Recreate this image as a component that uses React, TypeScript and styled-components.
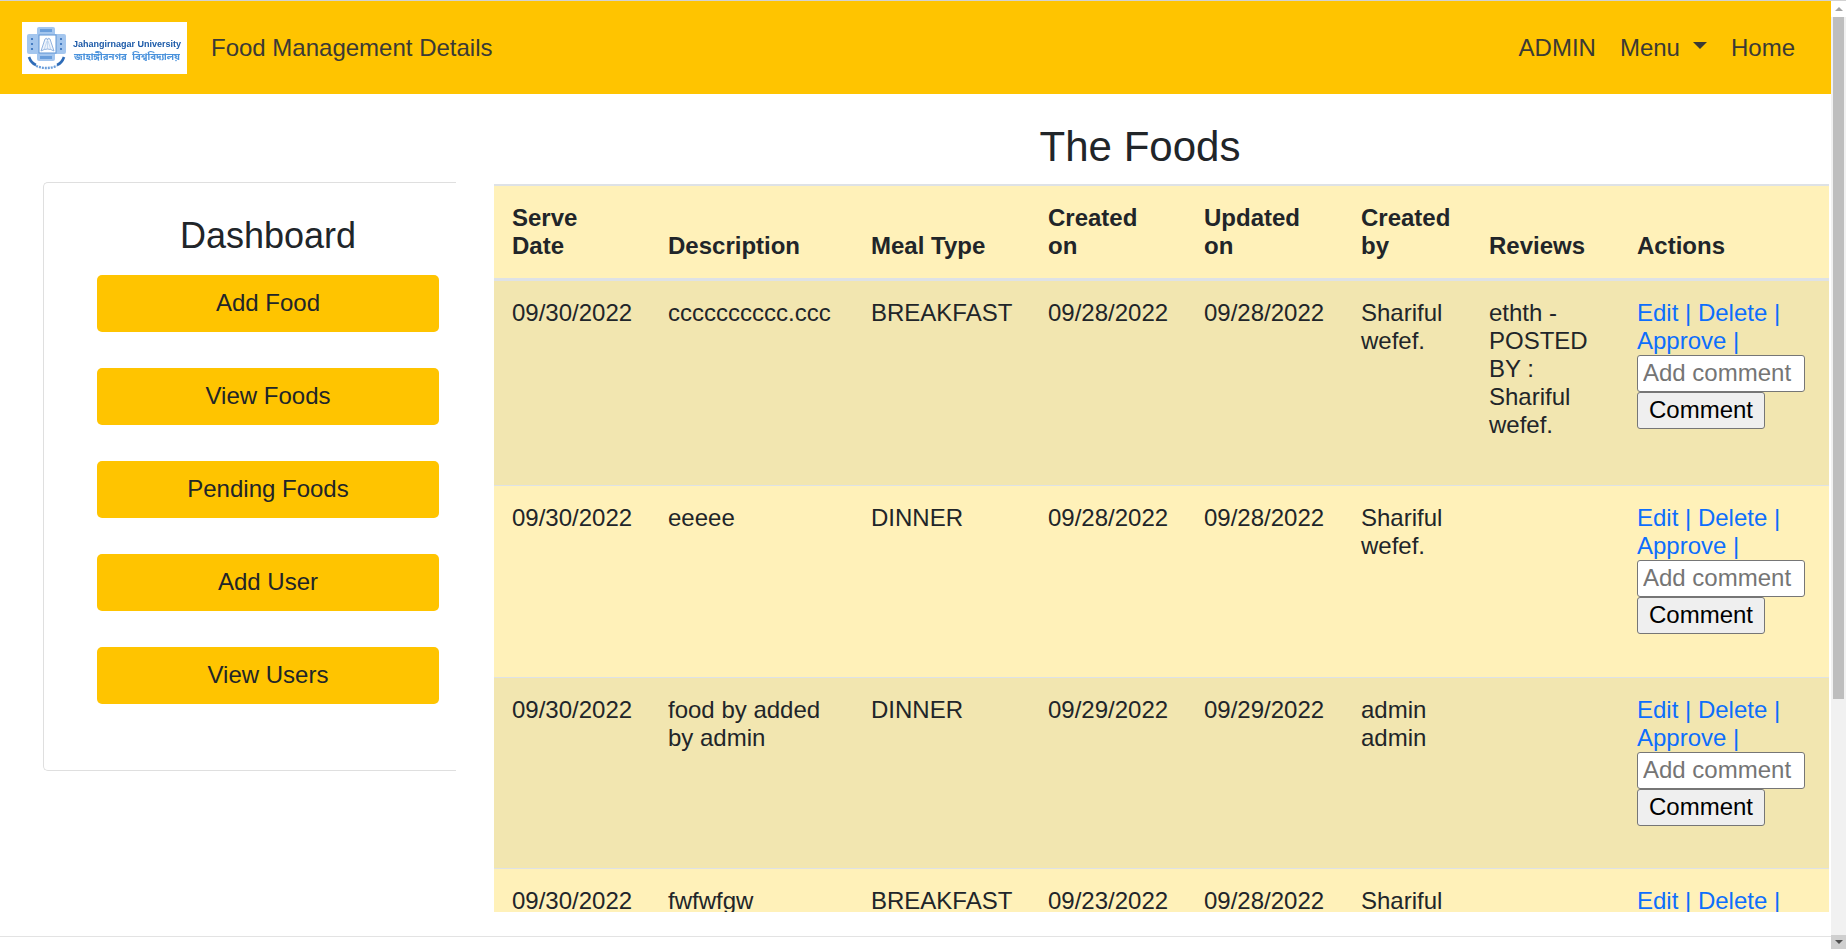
import React from "react";
import styled, { createGlobalStyle } from "styled-components";

const Global = createGlobalStyle`
  html, body { margin: 0; padding: 0; height: 100%; overflow: hidden; background: #fff; }
  body { font-family: "Liberation Sans", Arial, sans-serif; font-size: 24px; color: #212529; }
  * { box-sizing: border-box; }
`;

const Frame = styled.div`
  display: flex;
  width: 1846px;
  height: 949px;
  border-top: 1px solid #d2d2d2;
  overflow: hidden;
`;
const Page = styled.div`
  width: 1831px;
  height: 948px;
  display: flex;
  flex-direction: column;
`;
const Navbar = styled.nav`
  height: 93px;
  flex: none;
  background: #ffc400;
  display: flex;
  align-items: center;
  padding: 0 24px 0 22px;
`;
const Logo = styled.svg`
  width: 165px;
  height: 52px;
  display: block;
  flex: none;
  background: #fff;
`;
const Brand = styled.span`
  margin-left: 24px;
  font-size: 24px;
  color: #3b3a35;
`;
const NavLinks = styled.div`
  margin-left: auto;
  display: flex;
  align-items: center;
`;
const NavLink = styled.span`
  padding: 0 12px;
  font-size: 24px;
  color: #3b3a35;
  display: flex;
  align-items: center;
`;
const Caret = styled.i`
  display: block;
  margin-left: 13px;
  margin-top: -4px;
  border-top: 7px solid #3b3a35;
  border-left: 7px solid transparent;
  border-right: 7px solid transparent;
`;
const Body = styled.div`
  flex: 1;
  display: flex;
  min-height: 0;
`;
const Sidebar = styled.aside`
  width: 456px;
  flex: none;
  padding: 88px 0 0 43px;
`;
const Card = styled.section`
  height: 589px;
  border: 1px solid #dfdfdf;
  border-right: 0;
  border-radius: 5px 0 0 5px;
  padding: 31px 17px 0 53px;
  display: flex;
  flex-direction: column;
  gap: 36px;
`;
const CardTitle = styled.h2`
  margin: 0 0 -18px;
  font-size: 36px;
  font-weight: 400;
  line-height: 43px;
  text-align: center;
  color: #212529;
`;
const SideButton = styled.div`
  height: 57px;
  flex: none;
  border-radius: 5px;
  padding-bottom: 2px;
  background: #ffc400;
  color: #212529;
  font-size: 24px;
  display: flex;
  align-items: center;
  justify-content: center;
`;
const Content = styled.main`
  margin-left: 38px;
  width: 1335px;
  flex: none;
  display: flex;
  flex-direction: column;
`;
const Heading = styled.h1`
  margin: 28px 0 12px;
  padding-right: 43px;
  font-size: 42px;
  font-weight: 400;
  line-height: 50px;
  text-align: center;
  color: #212529;
`;
const TableClip = styled.div`
  height: 728px;
  overflow: hidden;
`;
const Table = styled.table`
  width: 1335px;
  table-layout: fixed;
  border-collapse: collapse;
  font-size: 24px;
  line-height: 28px;
  color: #212529;
`;
const HeadRow = styled.tr`
  height: 94px;
  background: #fff1b9;
`;
const Th = styled.th`
  padding: 16px 18px 18px;
  text-align: left;
  vertical-align: bottom;
  font-weight: 700;
  border-top: 2px solid #dee2e6;
  border-bottom: 3px solid #dee2e6;
`;
const Row = styled.tr<{ $odd: boolean; $h: number }>`
  height: ${(p) => p.$h}px;
  background: ${(p) => (p.$odd ? "#f2e6b0" : "#fff1b9")};
`;
const Td = styled.td`
  padding: 18px;
  vertical-align: top;
  border-top: 1px solid #dee2e6;
`;
const ActionLink = styled.a`
  color: #0d6efd;
  text-decoration: none;
`;
const CommentInput = styled.input`
  display: block;
  width: 168px;
  height: 37px;
  padding: 1px 5px;
  font: 24px "Liberation Sans", Arial, sans-serif;
  color: #000;
  background: #fff;
  border: 1px solid #767676;
  border-radius: 3px;
  &::placeholder { color: #757575; opacity: 1; }
`;
const CommentButton = styled.button`
  display: block;
  width: 128px;
  height: 37px;
  padding: 0;
  font: 24px "Liberation Sans", Arial, sans-serif;
  color: #000;
  background: #efefef;
  border: 1px solid #767676;
  border-radius: 3px;
`;
const Scrollbar = styled.div`
  width: 15px;
  height: 948px;
  flex: none;
  background: #f1f1f1;
  display: flex;
  flex-direction: column;
  align-items: center;
`;
const ScrollUp = styled.div`
  width: 15px;
  height: 16px;
  flex: none;
  background: #fff;
  display: flex;
  align-items: center;
  justify-content: center;
`;
const Thumb = styled.div`
  width: 11px;
  height: 682px;
  flex: none;
  background: #bebebe;
`;
const ScrollDown = styled.div`
  width: 15px;
  height: 14px;
  margin-top: auto;
  flex: none;
  background: #cfcfcf;
  display: flex;
  align-items: center;
  justify-content: center;
`;
const ArrowUp = styled.i`
  display: block;
  border-bottom: 4px solid #a3a3a3;
  border-left: 4px solid transparent;
  border-right: 4px solid transparent;
`;
const ArrowDown = styled.i`
  display: block;
  border-top: 4px solid #505050;
  border-left: 4px solid transparent;
  border-right: 4px solid transparent;
`;
const FooterLine = styled.div`
  height: 13px;
  flex: none;
  border-top: 1px solid #e3e3e3;
`;

const columns = [156, 203, 177, 156, 157, 128, 148, 210];
const headers = ["Serve Date", "Description", "Meal Type", "Created on", "Updated on", "Created by", "Reviews", "Actions"];
const rows = [
  { h: 206, cells: ["09/30/2022", "cccccccccc.ccc", "BREAKFAST", "09/28/2022", "09/28/2022", "Shariful wefef.", "ethth - POSTED BY : Shariful wefef."] },
  { h: 192, cells: ["09/30/2022", "eeeee", "DINNER", "09/28/2022", "09/28/2022", "Shariful wefef.", ""] },
  { h: 191, cells: ["09/30/2022", "food by added by admin", "DINNER", "09/29/2022", "09/29/2022", "admin admin", ""] },
  { h: 190, cells: ["09/30/2022", "fwfwfgw", "BREAKFAST", "09/23/2022", "09/28/2022", "Shariful wefef.", ""] },
];
const sideItems = ["Add Food", "View Foods", "Pending Foods", "Add User", "View Users"];

function LogoArt() {
  return (
    <Logo viewBox="0 0 165 52" role="img" aria-label="Jahangirnagar University">
      <defs>
        <filter id="soft" x="-5%" y="-5%" width="110%" height="110%">
          <feGaussianBlur stdDeviation="0.5" />
        </filter>
      </defs>
      <g filter="url(#soft)">
        <rect x="15" y="5" width="18" height="34" rx="2" fill="#a4c6ee" />
        <rect x="5" y="12" width="39" height="20" rx="2" fill="#a4c6ee" />
        <rect x="18" y="7" width="12" height="3" fill="#6a9edb" />
        <rect x="18" y="34" width="12" height="3" fill="#6a9edb" />
        <rect x="17" y="13" width="17" height="18" fill="#fff" stroke="#5e94d4" strokeWidth="1" />
        <path d="M19 29 L23 17 Q25 15 25.5 18 Q26 15 28 17 L32 29 Q25.5 25 19 29Z" fill="#eef4fc" stroke="#86aadb" strokeWidth="0.9" />
        <path d="M25.5 18 V27 M22 28 L25 19 M29 28 L26 19" stroke="#a8c4e8" strokeWidth="0.6" fill="none" />
        <circle cx="10" cy="17" r="1.1" fill="#2f6cb8" />
        <circle cx="10" cy="22" r="1.1" fill="#2f6cb8" />
        <circle cx="10" cy="27" r="1.1" fill="#2f6cb8" />
        <circle cx="39" cy="17" r="1.1" fill="#2f6cb8" />
        <circle cx="39" cy="22" r="1.1" fill="#2f6cb8" />
        <circle cx="39" cy="27" r="1.1" fill="#2f6cb8" />
        <path d="M7 35 Q9 41 14 43" fill="none" stroke="#2f6cb8" strokeWidth="2.6" />
        <path d="M42 35 Q40 41 35 43" fill="none" stroke="#2f6cb8" strokeWidth="2.6" />
        <path d="M14 44 Q24.5 48 35 44" fill="none" stroke="#6a9edb" strokeWidth="2.4" strokeDasharray="2 1" />
        <text x="51" y="25" fontFamily="'Liberation Sans', sans-serif" fontSize="9" fontWeight="700" fill="#1c5aa8">
          Jahangirnagar University
        </text>
        <text x="52" y="38" fontFamily="'Noto Sans Bengali', 'Noto Sans', 'DejaVu Sans', sans-serif" fontSize="9.4" fontWeight="700" wordSpacing="3" textLength="106" lengthAdjust="spacingAndGlyphs" fill="#4a92dc">
          জাহাঙ্গীরনগর বিশ্ববিদ্যালয়
        </text>
      </g>
    </Logo>
  );
}

export default function App() {
  return (
    <Frame>
      <Global />
      <Page>
        <Navbar>
          <LogoArt />
          <Brand>Food Management Details</Brand>
          <NavLinks>
            <NavLink>ADMIN</NavLink>
            <NavLink>
              Menu
              <Caret />
            </NavLink>
            <NavLink>Home</NavLink>
          </NavLinks>
        </Navbar>
        <Body>
          <Sidebar>
            <Card>
              <CardTitle>Dashboard</CardTitle>
              {sideItems.map((s) => (
                <SideButton key={s}>{s}</SideButton>
              ))}
            </Card>
          </Sidebar>
          <Content>
            <Heading>The Foods</Heading>
            <TableClip>
              <Table>
                <colgroup>
                  {columns.map((c, i) => (
                    <col key={i} style={{ width: c }} />
                  ))}
                </colgroup>
                <thead>
                  <HeadRow>
                    {headers.map((h) => (
                      <Th key={h}>{h}</Th>
                    ))}
                  </HeadRow>
                </thead>
                <tbody>
                  {rows.map((r, i) => (
                    <Row key={i} $odd={i % 2 === 0} $h={r.h}>
                      {r.cells.map((c, j) => (
                        <Td key={j}>{c}</Td>
                      ))}
                      <Td>
                        <ActionLink href="#">Edit | Delete | Approve |</ActionLink>
                        <CommentInput placeholder="Add comment" />
                        <CommentButton>Comment</CommentButton>
                      </Td>
                    </Row>
                  ))}
                </tbody>
              </Table>
            </TableClip>
          </Content>
        </Body>
        <FooterLine />
      </Page>
      <Scrollbar>
        <ScrollUp>
          <ArrowUp />
        </ScrollUp>
        <Thumb />
        <ScrollDown>
          <ArrowDown />
        </ScrollDown>
      </Scrollbar>
    </Frame>
  );
}
